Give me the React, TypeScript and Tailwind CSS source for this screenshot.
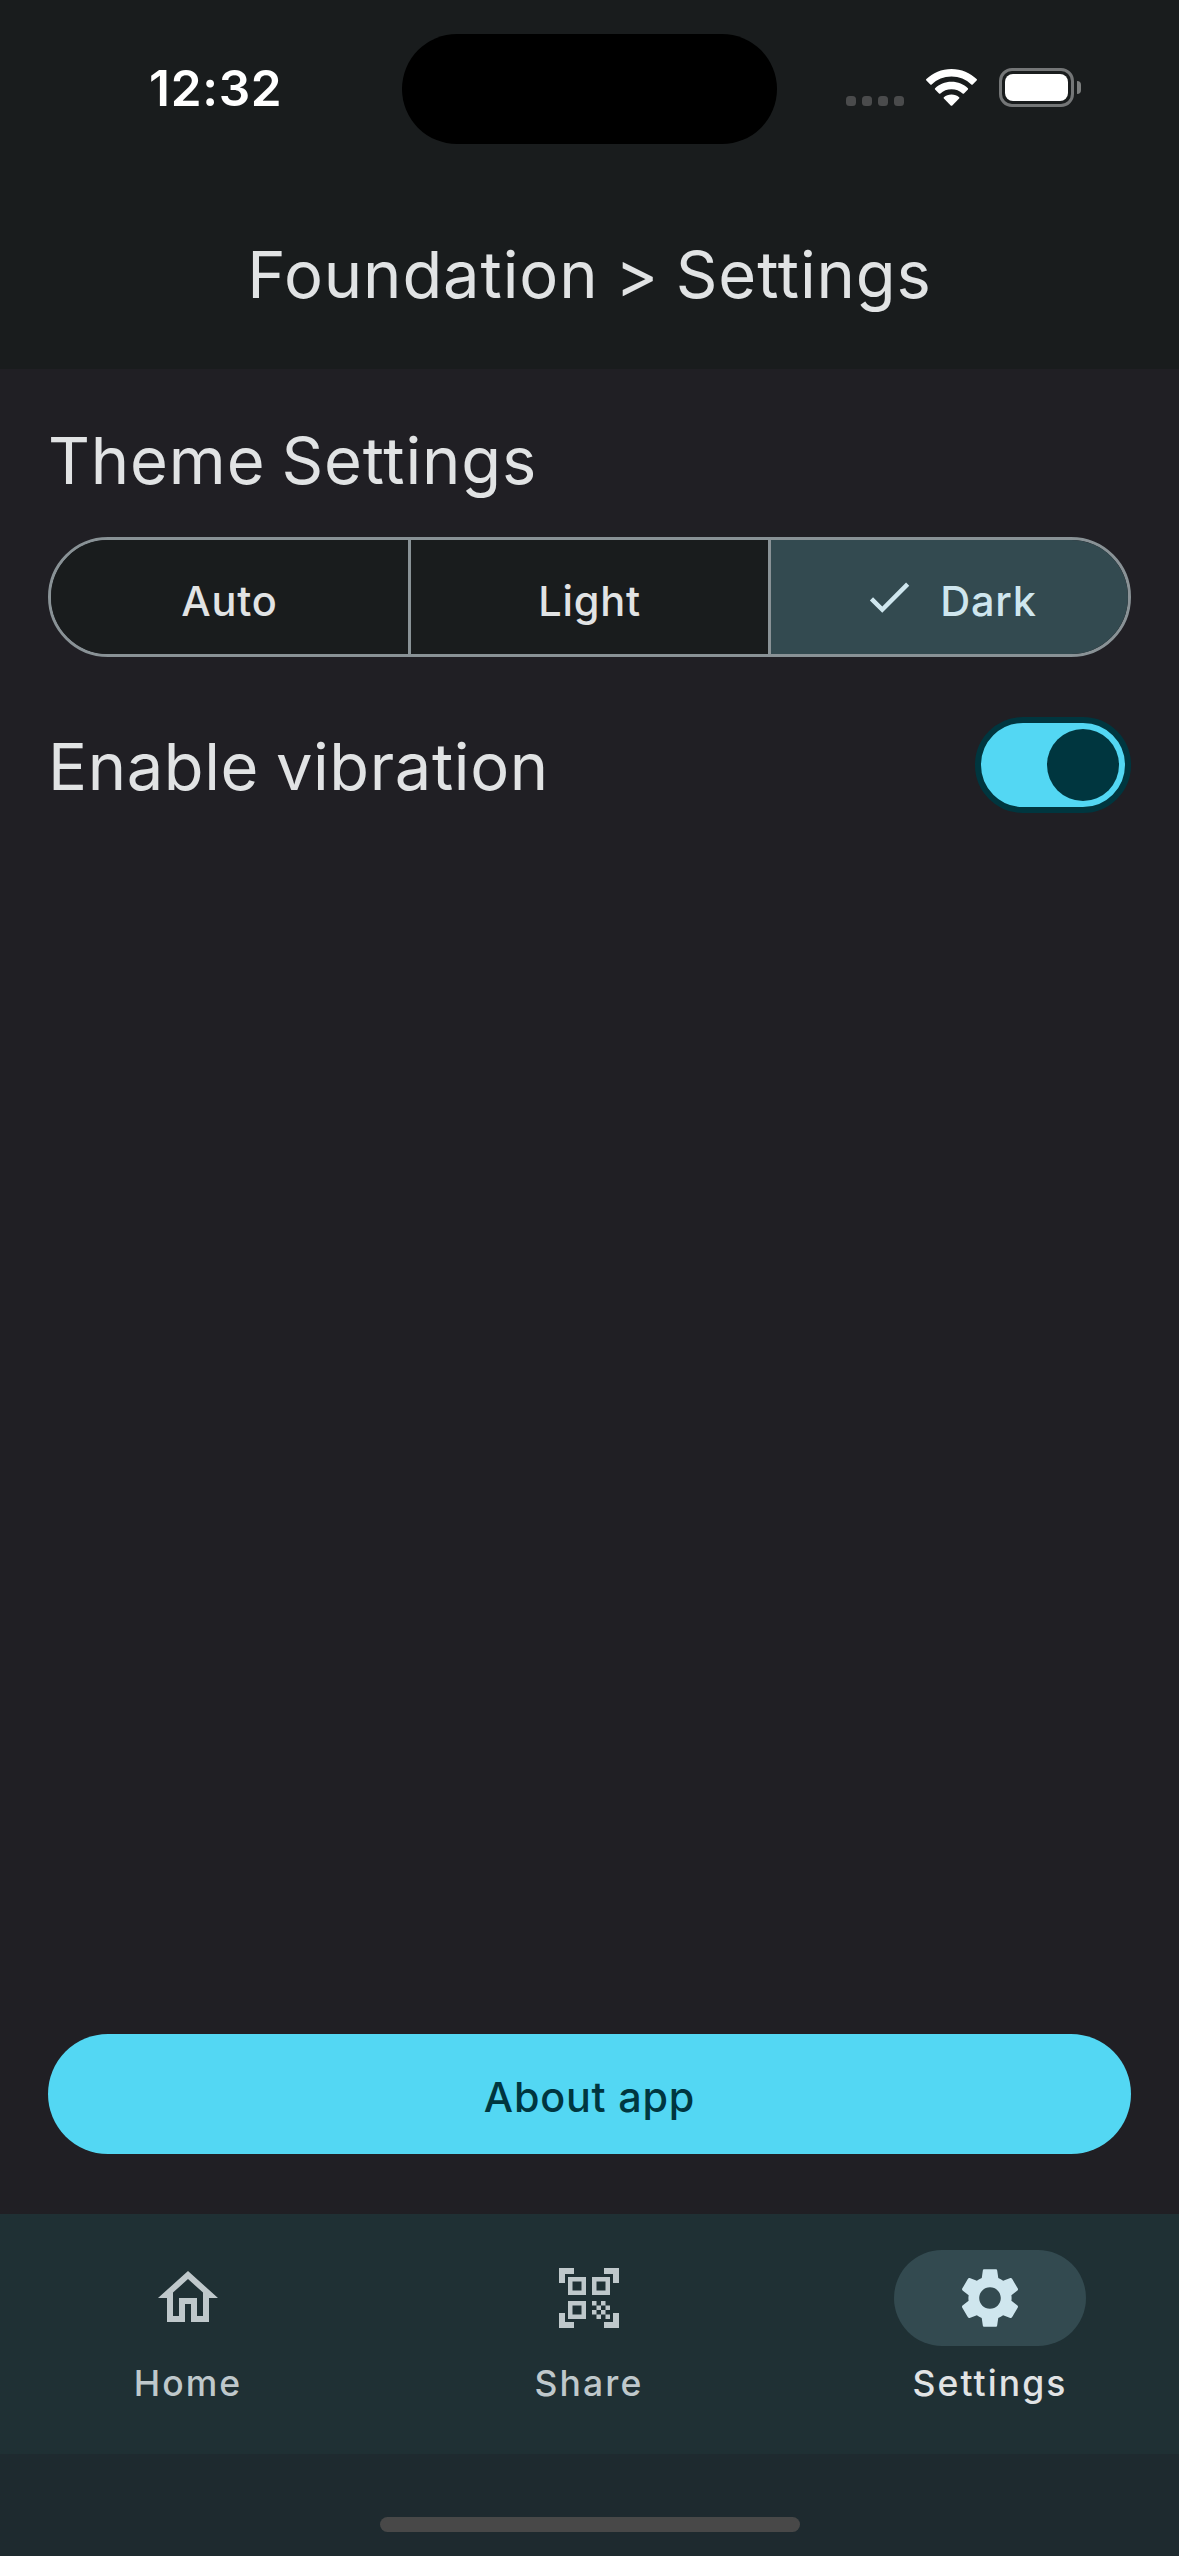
import React from "react";

const PATHS = {
  check: "M21,7L9,19L3.5,13.5L4.91,12.09L9,16.17L19.59,5.59L21,7Z",
  home: "M12 5.69L17 10.19V18H15V12H9V18H7V10.19L12 5.69M12 3L2 12H5V20H11V14H13V20H19V12H22L12 3Z",
  share:
    "M9.5 6.5v3h-3v-3h3M11 5H5v6h6V5zm-1.5 9.5v3h-3v-3h3M11 13H5v6h6v-6zm6.5-6.5v3h-3v-3h3M19 5h-6v6h6V5zm-6 8h1.5v1.5H13V13zm1.5 1.5H16V16h-1.5v-1.5zM16 13h1.5v1.5H16V13zm-3 3h1.5v1.5H13V16zm1.5 1.5H16V19h-1.5v-1.5zM16 16h1.5v1.5H16V16zm1.5-1.5H19V16h-1.5v-1.5zm0 3H19V19h-1.5v-1.5zM22 7h-2V4h-3V2h5v5zm0 15v-5h-2v3h-3v2h5zM2 22h5v-2H4v-3H2v5zM2 2v5h2V4h3V2H2z",
  settings:
    "M19.14 12.94c.04-.3.06-.61.06-.94 0-.32-.02-.64-.07-.94l2.03-1.58c.18-.14.23-.41.12-.61l-1.92-3.32c-.12-.22-.37-.29-.59-.22l-2.39.96c-.5-.38-1.03-.7-1.62-.94l-.36-2.54c-.04-.24-.24-.41-.48-.41h-3.84c-.24 0-.43.17-.47.41l-.36 2.54c-.59.24-1.13.57-1.62.94l-2.39-.96c-.22-.08-.47 0-.59.22L2.74 8.87c-.12.21-.08.47.12.61l2.03 1.58c-.05.3-.09.63-.09.94s.02.64.07.94l-2.03 1.58c-.18.14-.23.41-.12.61l1.92 3.32c.12.22.37.29.59.22l2.39-.96c.5.38 1.03.7 1.62.94l.36 2.54c.05.24.24.41.48.41h3.84c.24 0 .44-.17.47-.41l.36-2.54c.59-.24 1.13-.56 1.62-.94l2.39.96c.22.08.47 0 .59-.22l1.92-3.32c.12-.22.07-.47-.12-.61l-2.01-1.58zM12 15.6c-1.98 0-3.6-1.62-3.6-3.6s1.62-3.6 3.6-3.6 3.6 1.62 3.6 3.6-1.62 3.6-3.6 3.6z",
};

function Icon({ name, className }: { name: keyof typeof PATHS; className: string }) {
  return (
    <svg viewBox="0 0 24 24" fill="currentColor" className={className}>
      <path d={PATHS[name]} />
    </svg>
  );
}

function StatusBar() {
  return (
    <div className="grid h-[177px] grid-cols-[402px_375px_402px] pt-[34px]">
      <div className="pl-[149px] pt-[24px] text-[49.5px] leading-[60px] font-semibold tracking-[0.7px] text-white">12:32</div>
      <div className="h-[110px] rounded-full bg-black" />
      <div className="flex h-[73px] items-end pl-[69px]">
        <div className="mb-[1px] flex gap-[6px]">
          {[0, 1, 2, 3].map((i) => (
            <span key={i} className="size-[10px] rounded-[3.5px] bg-[#4a4b4c]" />
          ))}
        </div>
        <svg viewBox="0 0 51 37" className="mb-[1px] ml-[22px] h-[37px] w-[51px] shrink-0" fill="#fff">
          <path d="M25.5 0C35.400 0 44.400 3.900 50.600 10.100Q51.300 10.800 50.600 11.600L46.700 15.500Q46 16.100 45.300 15.500C40.100 10.600 33.200 7.600 25.500 7.600S10.900 10.600 5.700 15.500Q5 16.100 4.300 15.500L.4 11.600Q-.3 10.800 .4 10.100C6.600 3.900 15.600 0 25.500 0Z" />
          <path d="M25.5 12.700C32 12.700 37.800 15.200 41.900 19.200Q42.500 19.900 41.900 20.600L38 24.500Q37.300 25.100 36.600 24.500C33.700 21.800 29.800 20.300 25.500 20.300S17.300 21.800 14.400 24.500Q13.700 25.100 13 24.500L9.100 20.600Q8.500 19.900 9.100 19.200C13.200 15.200 19 12.700 25.500 12.700Z" />
          <path d="M25.5 25.500C28.500 25.500 31.100 26.500 33.100 28.200Q33.700 28.900 33.100 29.600L26.300 36.400Q25.500 37.100 24.700 36.400L17.900 29.600Q17.300 28.900 17.900 28.200C19.900 26.500 22.500 25.500 25.500 25.500Z" />
        </svg>
        <div className="ml-[22px] flex h-[39px] w-[75px] rounded-[13px] border-[3px] border-[#747677] p-[3px]">
          <div className="flex-1 rounded-[8px] bg-white" />
        </div>
        <div className="mb-[13px] ml-[3px] h-[13px] w-[4px] rounded-r-full bg-[#7c7e7e]" />
      </div>
    </div>
  );
}

function Segment({ label, selected = false, last = false }: { label: string; selected?: boolean; last?: boolean }) {
  return (
    <button
      className={
        "flex items-center justify-center pt-[8px] text-[41.5px] font-medium tracking-[0.8px] " +
        (selected ? "bg-[#334a50] text-[#cfe6ee] " : "bg-[#191c1d] text-[#e1e3e4] ") +
        (last ? "" : "border-r-[3px] border-[#899296]")
      }
    >
      {selected && <Icon name="check" className="mr-[24px] -mt-[8px] size-[54px]" />}
      {label}
    </button>
  );
}

function Tab({ icon, label, active = false }: { icon: keyof typeof PATHS; label: string; active?: boolean }) {
  return (
    <button className={"flex flex-col items-center pt-[36px] " + (active ? "text-[#e1e3e4]" : "text-[#bfc8cb]")}>
      <span
        className={
          "flex h-[96px] w-[192px] items-center justify-center rounded-full " +
          (active ? "bg-[#334a50] text-[#cfe6ee]" : "")
        }
      >
        <Icon name={icon} className="size-[72px]" />
      </span>
      <span className="mt-[14px] text-[35.5px] leading-[48px] font-medium tracking-[2.1px]">{label}</span>
    </button>
  );
}

export default function App() {
  return (
    <div className="flex h-[2556px] w-[1179px] flex-col overflow-hidden bg-[#201f24] font-[Inter,sans-serif] text-[#e1e3e4]">
      <header className="h-[369px] bg-[#191c1d]">
        <StatusBar />
        <h1 className="pt-[56px] text-center text-[65px] leading-[84px] tracking-[0.9px] [word-spacing:-2.5px]">
          Foundation &gt; Settings
        </h1>
      </header>

      <main className="flex flex-1 flex-col px-[48px] pt-[50px] pb-[60px]">
        <h2 className="text-[65px] leading-[84px] tracking-[0.85px] [word-spacing:-3px]">Theme Settings</h2>
        <div className="mt-[34px] grid h-[120px] grid-cols-[360px_360px_357px] overflow-hidden rounded-full border-[3px] border-[#899296]">
          <Segment label="Auto" />
          <Segment label="Light" />
          <Segment label="Dark" selected last />
        </div>
        <div className="mt-[60px] flex h-[96px] items-center justify-between">
          <span className="pt-[3px] text-[65px] leading-[84px] tracking-[0.6px] [word-spacing:-2px]">Enable vibration</span>
          <span className="flex h-[96px] w-[156px] items-center justify-end rounded-full border-[6px] border-[#00363f] bg-[#53d7f3] pr-[6px]">
            <span className="size-[72px] rounded-full bg-[#00363f]" />
          </span>
        </div>
        <button className="mt-auto h-[120px] rounded-full bg-[#53d7f3] pt-[8px] text-[41.3px] font-medium tracking-[0.8px] text-[#00363f]">
          About app
        </button>
      </main>

      <nav className="grid h-[240px] grid-cols-[376px_426px_376px] bg-[#1f3034]">
        <Tab icon="home" label="Home" />
        <Tab icon="share" label="Share" />
        <Tab icon="settings" label="Settings" active />
      </nav>
      <div className="flex h-[102px] justify-center bg-[#1e2a2f] pt-[63px]">
        <div className="h-[15px] w-[420px] rounded-full bg-[#484848]" />
      </div>
    </div>
  );
}
